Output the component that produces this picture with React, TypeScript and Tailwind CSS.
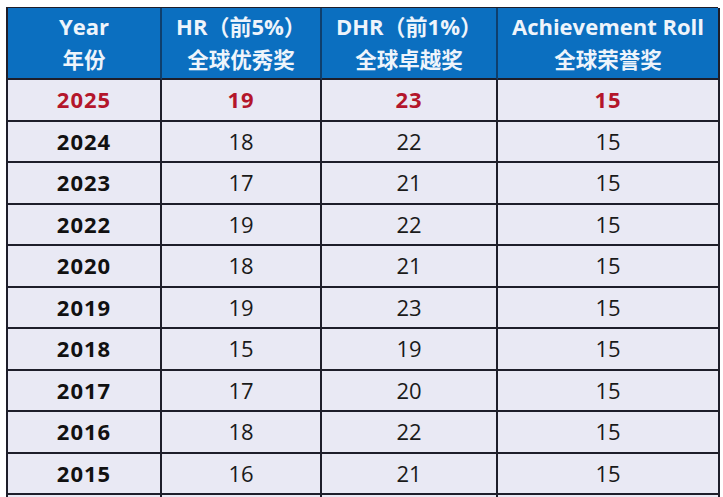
const headers = [
  { en: 'Year', zh: '年份' },
  { en: 'HR（前5%）', zh: '全球优秀奖' },
  { en: 'DHR（前1%）', zh: '全球卓越奖' },
  { en: 'Achievement Roll', zh: '全球荣誉奖' },
];

const rows: [string, string, string, string][] = [
  ['2025', '19', '23', '15'],
  ['2024', '18', '22', '15'],
  ['2023', '17', '21', '15'],
  ['2022', '19', '22', '15'],
  ['2020', '18', '21', '15'],
  ['2019', '19', '23', '15'],
  ['2018', '15', '19', '15'],
  ['2017', '17', '20', '15'],
  ['2016', '18', '22', '15'],
  ['2015', '16', '21', '15'],
  ['', '', '', ''],
];

const font = { fontFamily: '"Open Sans", "Noto Sans CJK SC", sans-serif' };

export default function App() {
  return (
    <div className="h-[497px] w-[723px] overflow-hidden bg-white pl-[6px] pt-[7px]" style={font}>
      <div className="grid w-[712px] grid-cols-[154px_160px_176px_222px] border-l-2 border-t border-[#1e1e2a]">
        {headers.map((h, i) => (
          <div
            key={h.en}
            className={`flex h-[72px] flex-col items-center justify-center border-b-2 border-[#1e1e2a] bg-[#0b6fc0] text-[22px] font-bold leading-[34px] text-[#eef4fb] ${
              i < 3 ? 'border-r-2 border-r-[#0e3f6e]' : 'border-r-2'
            }`}
          >
            <span>{h.en}</span>
            <span className="text-[21.5px]">{h.zh}</span>
          </div>
        ))}
        {rows.map((r, ri) =>
          r.map((cell, ci) => (
            <div
              key={`${ri}-${ci}`}
              className={`flex h-[41.5px] items-center justify-center border-b-2 border-r-2 border-[#1e1e2a] bg-[#e9e9f4] text-[22px] ${
                ri === 0
                  ? 'font-bold tracking-[1px] text-[#b4162b]'
                  : ci === 0
                    ? 'font-bold tracking-[1px] text-[#111]'
                    : 'text-[#1a1a1a]'
              }`}
            >
              {cell}
            </div>
          ))
        )}
      </div>
    </div>
  );
}
